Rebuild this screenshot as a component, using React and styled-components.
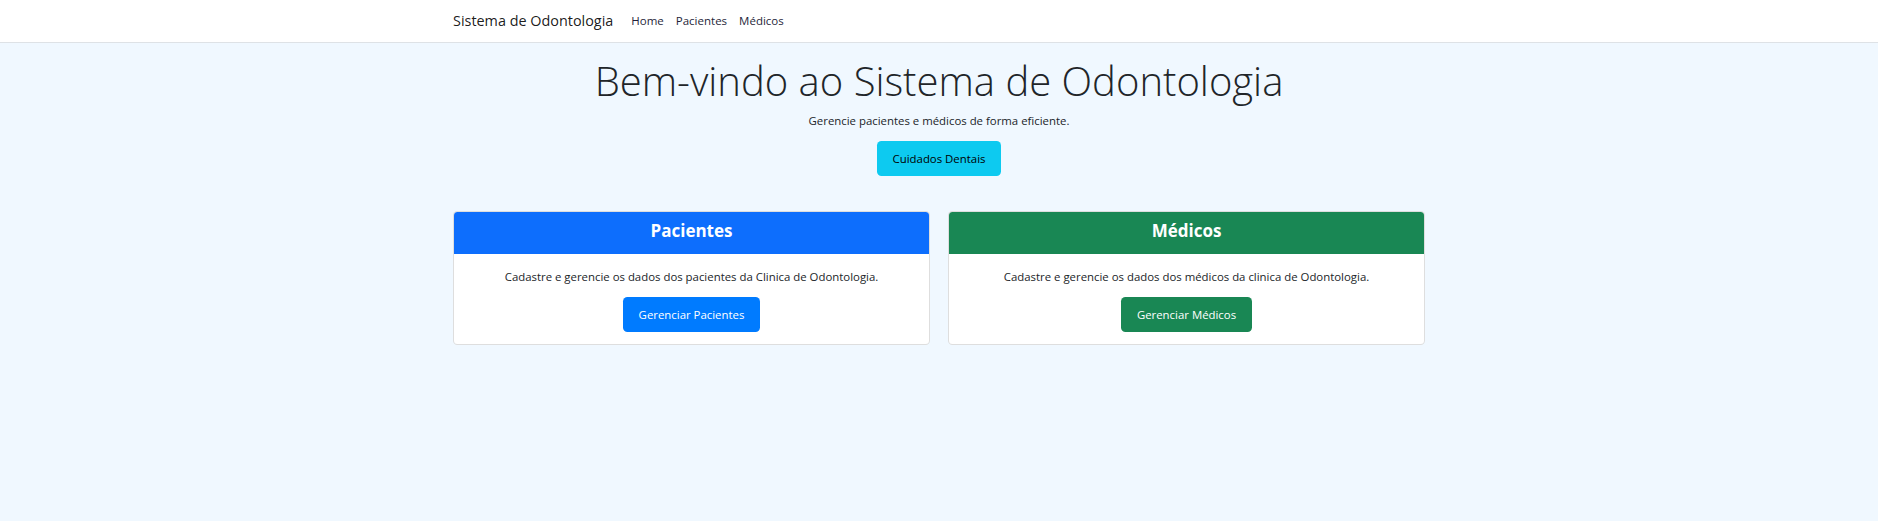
import styled, { createGlobalStyle } from "styled-components";

const GlobalStyle = createGlobalStyle`
  body {
    margin: 0;
    background-color: #f0f8ff;
    font-family: "Open Sans", "Noto Sans", sans-serif;
    font-size: 12px;
    line-height: 1.5;
    color: #212529;
  }
`;

const Navbar = styled.nav`
  background-color: #fff;
  border-bottom: 1px solid #dee2e6;
  height: 42px;
`;

const Container = styled.div`
  max-width: 972px;
  margin: 0 auto;
  padding: 0 9px;
`;

const NavInner = styled(Container)`
  display: flex;
  align-items: center;
  height: 100%;
`;

const Brand = styled.a`
  font-size: 14.4px;
  color: rgba(0, 0, 0, 0.9);
  margin-right: 12px;
  text-decoration: none;
`;

const NavLink = styled.a`
  font-size: 11.5px;
  color: #1f1f3a;
  padding: 0 6px;
  text-decoration: none;
`;

const Hero = styled.section`
  display: flex;
  flex-direction: column;
  align-items: center;
  padding-top: 14px;
`;

const Title = styled.h1`
  margin: 0;
  font-size: 40px;
  font-weight: 300;
  line-height: 1.2;
`;

const Lead = styled.p`
  margin: 6.5px 0 12.5px;
  font-size: 11.4px;
`;

const Button = styled.button`
  border: none;
  border-radius: 4.5px;
  padding: 8.5px 16px;
  font-family: inherit;
  font-size: 11.4px;
  line-height: 18px;
  color: ${(p) => p.$text || "#fff"};
  background-color: ${(p) => p.$bg};
  cursor: pointer;
`;

const CardRow = styled.div`
  display: grid;
  grid-template-columns: 1fr 1fr;
  gap: 18px;
  margin-top: 35px;
`;

const Card = styled.div`
  background: #fff;
  border: 1px solid rgba(0, 0, 0, 0.13);
  border-radius: 4.5px;
  overflow: hidden;
  text-align: center;
`;

const CardHeader = styled.div`
  background-color: ${(p) => p.$bg};
  color: #fff;
  height: 42px;
  display: flex;
  align-items: center;
  justify-content: center;
  padding-bottom: 4px;
  box-sizing: border-box;
`;

const CardTitle = styled.h4`
  margin: 0;
  font-size: 17px;
  font-weight: 700;
`;

const CardBody = styled.div`
  padding: 14px 12px 12px;
`;

const CardText = styled.p`
  margin: 0 0 12px;
  font-size: 11.4px;
`;

const sections = [
  {
    title: "Pacientes",
    header: "#0d6efd",
    button: "#007bff",
    text: "Cadastre e gerencie os dados dos pacientes da Clinica de Odontologia.",
    action: "Gerenciar Pacientes",
  },
  {
    title: "Médicos",
    header: "#198754",
    button: "#198754",
    text: "Cadastre e gerencie os dados dos médicos da clinica de Odontologia.",
    action: "Gerenciar Médicos",
  },
];

export default function App() {
  return (
    <>
      <GlobalStyle />
      <Navbar>
        <NavInner>
          <Brand href="#">Sistema de Odontologia</Brand>
          <NavLink href="#">Home</NavLink>
          <NavLink href="#">Pacientes</NavLink>
          <NavLink href="#">Médicos</NavLink>
        </NavInner>
      </Navbar>
      <Container>
        <Hero>
          <Title>Bem-vindo ao Sistema de Odontologia</Title>
          <Lead>Gerencie pacientes e médicos de forma eficiente.</Lead>
          <Button $bg="#0dcaf0" $text="#000">
            Cuidados Dentais
          </Button>
        </Hero>
        <CardRow>
          {sections.map((s) => (
            <Card key={s.title}>
              <CardHeader $bg={s.header}>
                <CardTitle>{s.title}</CardTitle>
              </CardHeader>
              <CardBody>
                <CardText>{s.text}</CardText>
                <Button $bg={s.button}>{s.action}</Button>
              </CardBody>
            </Card>
          ))}
        </CardRow>
      </Container>
    </>
  );
}
